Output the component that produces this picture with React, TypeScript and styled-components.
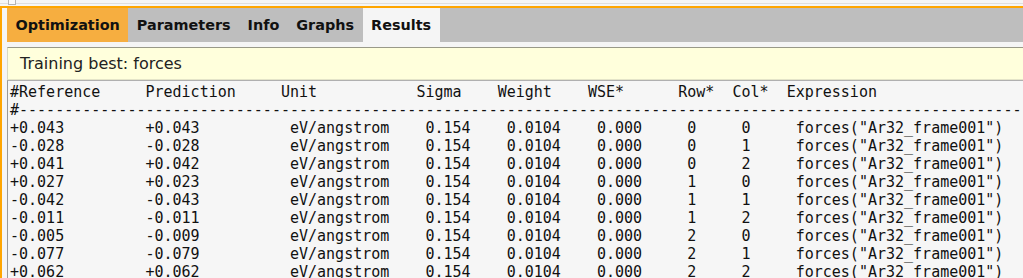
import styled, { createGlobalStyle } from 'styled-components';

const GlobalStyle = createGlobalStyle`
  html, body {
    margin: 0;
    padding: 0;
    background: #f5f5f5;
    overflow: hidden;
  }
`

const Page = styled.div`
  width: 1023px;
  height: 278px;
  overflow: hidden;
  font-family: "DejaVu Sans", sans-serif;
`

const TopStrip = styled.div`
  position: relative;
  height: 6px;
  background: #f5f5f5;
  &::after {
    content: '';
    position: absolute;
    left: 0;
    right: 0;
    top: 3px;
    height: 1px;
    background: #dedede;
  }
`

const ScrollStub = styled.div`
  position: absolute;
  left: 8px;
  top: 0;
  width: 6px;
  height: 4px;
  border: 1px solid #b4b4b4;
  border-top: none;
  background: #fafafa;
  z-index: 1;
`

const Frame = styled.div`
  border-top: 2px solid #ffa500;
  border-left: 2px solid #ffa500;
  padding-left: 5px;
  min-height: 300px;
`

const TabBar = styled.div`
  display: flex;
  height: 34px;
  background: #bebebe;
`

const Tab = styled.div<{ $active?: boolean; $selected?: boolean }>`
  display: flex;
  align-items: center;
  padding: 0 8.5px;
  font-size: 14.4px;
  font-weight: bold;
  color: #111;
  background: ${p => p.$active ? '#f6ae40' : p.$selected ? '#f5f5f5' : 'transparent'};
`

const Notice = styled.div`
  margin-top: 5px;
  height: 31px;
  display: flex;
  align-items: center;
  padding-left: 12px;
  background: #ffffdc;
  border-top: 1px solid #999988;
  border-left: 1px solid #d8d8c0;
  border-bottom: 1px solid #e4e4c8;
  font-size: 16px;
  color: #222;
  white-space: nowrap;
`

const Output = styled.pre`
  margin: 0;
  padding: 2px 0 0 2px;
  border-top: 1px solid #b0b0b0;
  border-left: 1px solid #999;
  background: #f6f6f6;
  font-family: "DejaVu Sans Mono", monospace;
  font-size: 15px;
  line-height: 18px;
  color: #111;
  white-space: pre;
  overflow: hidden;
`

const tabs = ['Optimization', 'Parameters', 'Info', 'Graphs', 'Results']

const rows: [string, string, number, number][] = [
  ['+0.043', '+0.043', 0, 0],
  ['-0.028', '-0.028', 0, 1],
  ['+0.041', '+0.042', 0, 2],
  ['+0.027', '+0.023', 1, 0],
  ['-0.042', '-0.043', 1, 1],
  ['-0.011', '-0.011', 1, 2],
  ['-0.005', '-0.009', 2, 0],
  ['-0.077', '-0.079', 2, 1],
  ['+0.062', '+0.062', 2, 2],
]

const header = '#Reference'.padEnd(15) + 'Prediction'.padEnd(15) + 'Unit'.padEnd(15) +
  'Sigma'.padEnd(9) + 'Weight'.padEnd(10) + 'WSE*'.padEnd(10) + 'Row*'.padEnd(6) + 'Col*'.padEnd(6) + 'Expression'

const lines = [
  header,
  '#' + '-'.repeat(112),
  ...rows.map(([ref, pred, r, c]) =>
    ref.padEnd(15) + pred.padEnd(16) + 'eV/angstrom'.padEnd(15) + '0.154'.padEnd(9) +
    '0.0104'.padEnd(10) + '0.000'.padEnd(10) + String(r).padEnd(6) + String(c).padEnd(6) +
    'forces("Ar32_frame001")'),
]

function App() {
  return (
    <>
      <GlobalStyle />
      <Page>
        <TopStrip><ScrollStub /></TopStrip>
        <Frame>
          <TabBar>
            {tabs.map((t, i) => <Tab key={t} $active={i === 0} $selected={t === 'Results'}>{t}</Tab>)}
          </TabBar>
          <Notice>Training best: forces</Notice>
          <Output>{lines.join('\n')}</Output>
        </Frame>
      </Page>
    </>
  );
}

export default App;
